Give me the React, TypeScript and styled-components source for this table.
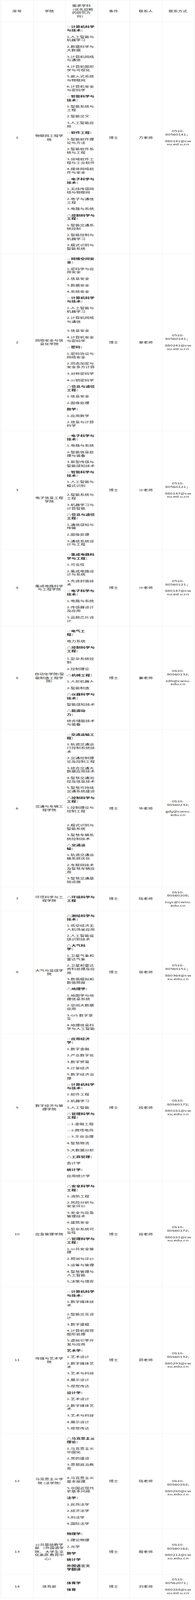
import React, { useEffect, useState } from "react";
import styled, { createGlobalStyle } from "styled-components";

const FRAME_H = 7536;

const GlobalStyle = createGlobalStyle`
  html, body { margin: 0; padding: 0; background: #ffffff; }
  body {
    font-family: "Noto Sans CJK SC", "Noto Sans", "DejaVu Sans", sans-serif;
    color: #2b2b2b;
  }
`;

/* The page is drawn at the reference's 7536px height; when the browser
   window is shorter than that, it is fitted vertically into the window. */
const Page = styled.div`
  overflow: hidden;
  width: 500px;
`;

const Fit = styled.div`
  transform-origin: 0 0;
  height: ${FRAME_H}px;
`;

const Table = styled.table`
  border-collapse: collapse;
  table-layout: fixed;
  width: 495px;
  margin: 1px 0 0 2px;
  font-size: 12px;
  line-height: 16.6px;
`;

const Col = styled.col`
  width: 82.5px;
`;

const HeadCell = styled.th`
  border: 1px solid #eeeeee;
  padding: 2.5px 3px;
  vertical-align: middle;
  text-align: center;
  font-weight: 700;
  white-space: nowrap;
`;

const Cell = styled.td<{ $left?: boolean; $shift?: number }>`
  border: 1px solid #eeeeee;
  padding: ${(p) => 1.5 + (p.$shift ?? 0)}px 3px 1.5px;
  vertical-align: middle;
  text-align: ${(p) => (p.$left ? "left" : "center")};
  white-space: nowrap;
`;

const Para = styled.p<{ $bold?: boolean; $gap?: number }>`
  margin: ${(p) => 13.7 + (p.$gap ?? 0)}px 0 13.7px;
  font-weight: ${(p) => (p.$bold ? 700 : 400)};
`;

const Star = styled.span`
  font-size: 11px;
  line-height: 0;
  font-weight: 400;
  color: #8c8c8c;
`;

type P = { t: string[]; b?: boolean; g?: number };
type Row = {
  no: string;
  college: string[];
  collegeShift?: number;
  subjects: P[];
  person: string;
  phone: string[];
  email: string[];
  contactShift?: number;
};

const n = (...t: string[]): P => ({ t });
const h = (...t: string[]): P => ({ t, b: true });
const g = (gap: number, ...t: string[]): P => ({ t, g: gap });

const rows: Row[] = [
  {
    no: "1",
    college: ["物联网工程学", "院"],
    subjects: [
      h("☆计算机科学", "与技术："),
      n("1.人工智能与", "机器学习"),
      n("2.数据科学与", "大数据"),
      n("3.计算机网络", "与通信"),
      n("4.计算机图形", "学与可视化"),
      n("5.嵌入式系统", "与物联网"),
      n("6.计算机安全", "与密码学"),
      h("☆智能科学与", "技术："),
      n("1.智能系统与", "工程"),
      n("2.智能交叉"),
      n("3.人工智能应", "用"),
      h("☆软件工程："),
      n("1.智能软件理", "论与方法"),
      n("2.智能软件系", "统与工程"),
      n("3.领域软件工", "程与工业软件"),
      n("4.媒体网络软", "件与安全"),
      h("☆电子科学与", "技术："),
      n("1.无线传感网", "络与物联网"),
      n("2.电子与通信", "工程"),
      n("3.电路与系统"),
      h("△控制科学与", "工程："),
      n("1.智能交通系", "统控制"),
      n("2.智能控制与", "机器学习"),
      n("3.模式识别与", "智能系统"),
    ],
    person: "万老师",
    phone: ["0510-", "80560141；"],
    email: ["880141@cw", "xu.ed u.cn"],
  },
  {
    no: "2",
    college: ["网络安全与信", "息化学院"],
    subjects: [
      h("☆网络空间安", "全："),
      n("1.密码学与应", "用安全"),
      n("2.信息安全"),
      n("3.数据安全"),
      n("4.系统安全"),
      h("☆计算机科学", "与技术："),
      n("1.人工智能与", "机器学习"),
      n("2.计算机网络", "与通信"),
      g(14, "3.信息安全"),
      n("4.计算机安全", "与密码学"),
      h("☆密码："),
      n("1.密码协议与", "网络安全"),
      n("2.同态加密与", "安全多方计算"),
      n("3.对称密码学"),
      n("4.公钥密码学"),
      h("△信息与通信", "工程："),
      n("1.信息安全"),
      n("2.图像处理"),
      h("数学："),
      n("1.应用数学"),
      n("2.信息与计算", "科学"),
    ],
    person: "单老师",
    phone: ["0510-", "80560141；"],
    email: ["880241@cw", "xu.ed u.cn"],
  },
  {
    no: "3",
    college: ["电子信息工程", "学院"],
    collegeShift: 88,
    subjects: [
      h("☆电子科学与", "技术："),
      n("1.电路与系统"),
      n("2.智能信息处", "理与装备"),
      n("3.新型传感与", "智能感知技术"),
      h("☆智能科学与", "技术："),
      n("1.人工智能与", "模式识别"),
      g(13, "2.智能系统与", "工程"),
      n("3.机器学习与", "计算智能"),
      h("△信息与通信", "工程："),
      n("1.通信感知与", "传输"),
      n("2.图像处理"),
      n("3.通信系统设", "计与工程"),
    ],
    person: "沙老师",
    phone: ["0510-", "80560121；"],
    email: ["880147@cw", "xu.ed u.cn"],
  },
  {
    no: "4",
    college: ["集成电路科学", "与工程学院"],
    subjects: [
      h("☆集成电路科", "学与工程："),
      n("1.可靠性"),
      n("2.集成电路设", "计与系统"),
      n("3.先进封装技", "术"),
      h("☆电子科学与", "技术："),
      n("1.电路与系统"),
      n("2.传感器设计", "及应用"),
      n("3.高频芯片设", "计"),
    ],
    person: "沙老师",
    phone: ["0510-", "80560121；"],
    email: ["880147@cw", "xu.ed u.cn"],
  },
  {
    no: "5",
    college: ["自动化学院(智", "能制造工程学", "院)"],
    subjects: [
      h("☆电气工", "程："),
      n("电力系统"),
      h("△控制科学与", "工程："),
      g(7, "1.复杂系统控", "制"),
      n("2.控制理论"),
      h("△机械工程："),
      n("1.人形机器人"),
      n("2.智能制造"),
      h("△仪器科学与", "技术："),
      n("智能感知技术"),
      h("△能源动", "力："),
      n("综合储能技术", "与装备"),
    ],
    person: "姜老师",
    phone: ["0510-", "80560132;"],
    email: ["zdh@cwxu.", "edu.cn"],
  },
  {
    no: "6",
    college: ["交通与车辆工", "程学院"],
    subjects: [
      h("☆交通运输工", "程："),
      n("1.轨道交通运", "行控制系统技", "术"),
      n("2.交通控制理", "论及控制工程"),
      n("3.综合交通大", "数据应用技术"),
      n("4.智慧交通测", "控及信息技术"),
      n("5.智慧可持续", "交通系统建设"),
      h("△控制科学与", "工程："),
      n("1.控制理论与", "控制工程"),
      g(35, "2.模式识别与", "智能系统"),
      n("3.智慧车辆系", "统控制技术"),
      h("△交通运", "输："),
      n("1.轨道交通运", "输系统优化"),
      n("2.车联网技术", "及智慧车辆应", "用"),
      n("3.智慧交通基", "础设施"),
    ],
    person: "毕老师",
    phone: ["0510-", "80560232;"],
    email: ["gdy@cwxu.", "edu.cn"],
  },
  {
    no: "7",
    college: ["环境科学与工", "程学院"],
    subjects: [h("△环境科学与", "工程")],
    person: "陆老师",
    phone: ["0510-", "80560208;"],
    email: ["luyc@cwxu.", "edu.cn"],
  },
  {
    no: "8",
    college: ["大气与遥感学", "院"],
    subjects: [
      h("△测绘科学与", "技术："),
      n("1.低空经济无", "人机场景应用"),
      n("2.人工智能遥", "感识别技术"),
      h("△大气科", "学："),
      n("1.卫星气象和", "雷达气象"),
      n("2.卫星和雷达", "资料处理及应", "用"),
      n("3.数值模拟和", "数值预报"),
      h("△地理学："),
      n("1.地图学与地", "理信息系统"),
      n("2.空间大数据", "应用"),
      n("3.GIS 数字孪", "生"),
      n("4.地理信息科", "学与人工智能"),
    ],
    person: "张老师",
    phone: ["0510-", "80560151；"],
    email: ["880364@cw", "xu.edu.cn"],
  },
  {
    no: "9",
    college: ["数字经济与管", "理学院"],
    subjects: [
      h("☆应用经济", "学："),
      n("1.数字金融"),
      n("2.产业数字化"),
      n("3.数字贸易"),
      n("4.计量经济"),
      n("5.数字经济治", "理"),
      h("☆计算机科学", "与技术："),
      n("1.软件工程"),
      n("2.机器学习"),
      n("3.人工智能"),
      h("△管理科学与", "工程："),
      n("☆1.金融工程"),
      n("☆2.跨境电商"),
      n("☆3.平台治理"),
      n("4.智慧物流"),
      g(4, "5.大数据分析"),
      h("△工商管理："),
      n("会计学"),
      h("统计学："),
      n("应用统计学"),
    ],
    person: "段老师",
    phone: ["0510-", "80560172;"],
    email: ["880151@cw", "xu.edu.cn"],
  },
  {
    no: "10",
    college: ["应急管理学院"],
    subjects: [
      h("△安全科学与", "工程："),
      n("1.消防工程"),
      n("2.风险分析与", "安全评价"),
      n("3.安全与应急", "管理技术"),
      n("4.建筑安全"),
      n("5.复杂系统可", "靠性"),
      h("△管理科学与", "工程："),
      n("1.公共安全管", "理"),
      n("2.预测与评价"),
      n("3.运筹与管理"),
      n("4.智慧管理与", "人工智能"),
      n("5.决策与博弈"),
    ],
    person: "段老师",
    phone: ["0510-", "80560172;"],
    email: ["880151@cw", "xu.edu.cn"],
  },
  {
    no: "11",
    college: ["传媒与艺术学", "院"],
    subjects: [
      h("☆计算机科学", "与技术："),
      n("1.数字媒体技", "术"),
      g(12, "2.智能交互设", "计"),
      n("3.数字建模"),
      n("4.计算机视觉", "图形处理"),
      n("5.虚拟引擎开", "发与应用"),
      h("艺术学："),
      n("1.艺术设计"),
      n("2.数字媒体艺", "术"),
      n("3.艺术与科技"),
      n("4.展示设计"),
      n("5.视觉传达"),
      h("设计学："),
      n("1.艺术设计"),
      n("2.数字媒体艺", "术"),
      n("3.艺术与科技"),
      n("4.展示设计"),
      n("5.视觉传达"),
    ],
    person: "茆老师",
    phone: ["0510-", "80560192;"],
    email: ["880293@cw", "xu.edu.cn"],
  },
  {
    no: "12",
    college: ["马克思主义学", "院 (法学院)"],
    contactShift: 64,
    subjects: [
      h("△马克思主义", "理论："),
      n("1.马克思主义", "中国化"),
      n("2.党的建设"),
      n("3.思想政治教", "育"),
      g(15, "4.马克思主义", "基本原理"),
      n("5.中国近现代", "史基本问题"),
      h("法学："),
      n("1.民商法学"),
      n("2.经济法学"),
      n("3.刑法学"),
      n("4.国际法学"),
    ],
    person: "陆老师",
    phone: ["0510-", "80560252;"],
    email: ["880250@cw", "xu.edu.cn"],
  },
  {
    no: "13",
    college: ["公共基础教学", "部 （外国语学", "院、 大学生文", "化素质 教育中", "心）"],
    subjects: [
      h("物理学："),
      n("1.理论物理"),
      n("2.光学"),
      h("数学"),
      h("统计学"),
      h("外国语言文", "学翻译"),
    ],
    person: "殷老师",
    phone: ["0510-", "80560162;"],
    email: ["880212@cw", "xu.edu.cn"],
  },
  {
    no: "14",
    college: ["体育部"],
    subjects: [h("体育学"), h("体育")],
    person: "刘老师",
    phone: ["0510-", "80562071；"],
    email: ["880258@cw", "xu.ed u.cn"],
  },
];

function Marked({ text }: { text: string }) {
  if (text.startsWith("☆")) {
    return (
      <>
        <Star>☆</Star>
        {text.slice(1)}
      </>
    );
  }
  return <>{text}</>;
}

function Lines({ lines }: { lines: string[] }) {
  return (
    <>
      {lines.map((l, i) => (
        <React.Fragment key={i}>
          {i > 0 && <br />}
          <Marked text={l} />
        </React.Fragment>
      ))}
    </>
  );
}

function frameScale() {
  if (typeof window === "undefined" || !window.innerHeight) return 1;
  return Math.min(1, window.innerHeight / FRAME_H);
}

export default function App() {
  const [k, setK] = useState(frameScale);
  useEffect(() => {
    const onResize = () => setK(frameScale());
    window.addEventListener("resize", onResize);
    return () => window.removeEventListener("resize", onResize);
  }, []);

  return (
    <>
      <GlobalStyle />
      <Page style={{ height: `${Math.floor(FRAME_H * k)}px` }}>
        <Fit style={{ transform: `scaleY(${k})` }}>
          <Table>
            <colgroup>
              <Col />
              <Col />
              <Col />
              <Col />
              <Col />
              <Col />
            </colgroup>
            <thead>
              <tr>
                <HeadCell>
                  <Para>序号</Para>
                </HeadCell>
                <HeadCell>
                  <Para>学院</Para>
                </HeadCell>
                <HeadCell>
                  <Para>
                    <Lines lines={["需求学科", "（优先招聘", "的研究方", "向）"]} />
                  </Para>
                </HeadCell>
                <HeadCell>
                  <Para>条件</Para>
                </HeadCell>
                <HeadCell>
                  <Para>联系人</Para>
                </HeadCell>
                <HeadCell>
                  <Para>联系方式</Para>
                </HeadCell>
              </tr>
            </thead>
            <tbody>
              {rows.map((r) => (
                <tr key={r.no}>
                  <Cell>
                    <Para>{r.no}</Para>
                  </Cell>
                  <Cell $shift={r.collegeShift}>
                    <Para>
                      <Lines lines={r.college} />
                    </Para>
                  </Cell>
                  <Cell $left>
                    {r.subjects.map((s, i) => (
                      <Para key={i} $bold={s.b} $gap={s.g}>
                        <Lines lines={s.t} />
                      </Para>
                    ))}
                  </Cell>
                  <Cell>
                    <Para>博士</Para>
                  </Cell>
                  <Cell>
                    <Para>{r.person}</Para>
                  </Cell>
                  <Cell $shift={r.contactShift}>
                    <Para>
                      <Lines lines={r.phone} />
                    </Para>
                    <Para>
                      <Lines lines={r.email} />
                    </Para>
                  </Cell>
                </tr>
              ))}
            </tbody>
          </Table>
        </Fit>
      </Page>
    </>
  );
}
